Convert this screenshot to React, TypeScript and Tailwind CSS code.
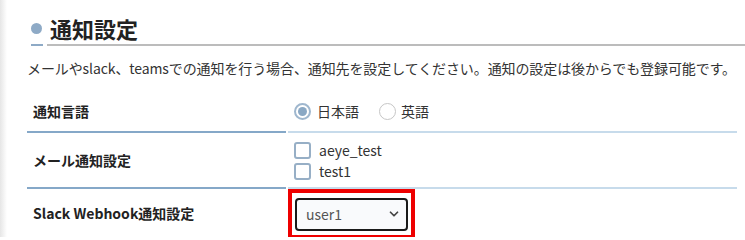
import { ChevronDown } from 'lucide-react';

const font = { fontFamily: '"Noto Sans CJK JP", "Noto Sans", sans-serif' };

function Row({
  label,
  height,
  children,
}: {
  label: string;
  height: string;
  children: React.ReactNode;
}) {
  return (
    <div className={`flex ${height}`}>
      <div className="flex w-[259px] items-center border-b-2 border-[#85a8c8] pl-[6px] text-[14px] font-bold text-[#222]">
        {label}
      </div>
      <div className="ml-[2px] flex flex-1 items-center border-b-2 border-[#c7dbeb] pl-[6px]">
        {children}
      </div>
    </div>
  );
}

export default function App() {
  return (
    <div className="flex h-[237px] w-[745px] overflow-hidden bg-white" style={font}>
      <div className="w-[7px] shrink-0 bg-gradient-to-r from-[#e6e6e6] to-white" />
      <div className="flex-1">
        <div className="flex items-center pt-[13px] pl-[24px]">
          <span className="h-[11px] w-[11px] rounded-full bg-[#8eaac6]" />
          <h1 className="ml-[8px] text-[22px] font-bold leading-[30px] text-[#222]">通知設定</h1>
        </div>
        <div className="mt-[1px] flex items-center pl-[24px]">
          <span className="h-[2px] w-[12px] bg-[#8eaac6]" />
          <span className="ml-[4px] h-[2px] flex-1 bg-[#bcbcbc]" />
        </div>
        <p className="mt-[12px] pl-[20px] text-[14px] leading-[20px] tracking-[-0.1px] text-[#333]">
          メールやslack、teamsでの通知を行う場合、通知先を設定してください。通知の設定は後からでも登録可能です。
        </p>
        <div className="mt-[14px] ml-[20px] mr-[8px]">
          <Row label="通知言語" height="h-[41px]">
            <label className="flex items-center text-[14px] text-[#333]">
              <span className="flex h-[17px] w-[17px] items-center justify-center rounded-full border-2 border-[#9fb7ce]">
                <span className="h-[9px] w-[9px] rounded-full bg-[#8aa8c4]" />
              </span>
              <span className="ml-[6px]">日本語</span>
            </label>
            <label className="ml-[20px] flex items-center text-[14px] text-[#333]">
              <span className="h-[17px] w-[17px] rounded-full border border-[#c6c6c6]" />
              <span className="ml-[5px]">英語</span>
            </label>
          </Row>
          <Row label="メール通知設定" height="h-[56px]">
            <div className="flex flex-col gap-[3px] pt-[1px]">
              <label className="flex items-center text-[14px] leading-[18px] text-[#333]">
                <span className="h-[17px] w-[17px] rounded-[3px] border-2 border-[#97afc6]" />
                <span className="ml-[8px]">aeye_test</span>
              </label>
              <label className="flex items-center text-[14px] leading-[18px] text-[#333]">
                <span className="h-[17px] w-[17px] rounded-[3px] border-2 border-[#97afc6]" />
                <span className="ml-[8px]">test1</span>
              </label>
            </div>
          </Row>
          <div className="flex h-[50px]">
            <div className="flex w-[259px] items-center border-b-2 border-[#85a8c8] pl-[6px] text-[14px] font-bold text-[#222]">
              Slack Webhook通知設定
            </div>
            <div className="ml-[2px] flex flex-1 border-b-2 border-[#c7dbeb]">
              <div className="flex h-[50px] w-[127px] items-center justify-center border-4 border-[#ee0000]">
                <div className="flex h-[33px] w-[113px] items-center justify-between rounded-[4px] border-2 border-[#1a1a1a] bg-[#f9fafc] pl-[9px] pr-[5px] text-[14px] text-[#555]">
                  <span>user1</span>
                  <ChevronDown size={14} strokeWidth={3} className="text-[#444]" />
                </div>
              </div>
            </div>
          </div>
        </div>
      </div>
    </div>
  );
}
